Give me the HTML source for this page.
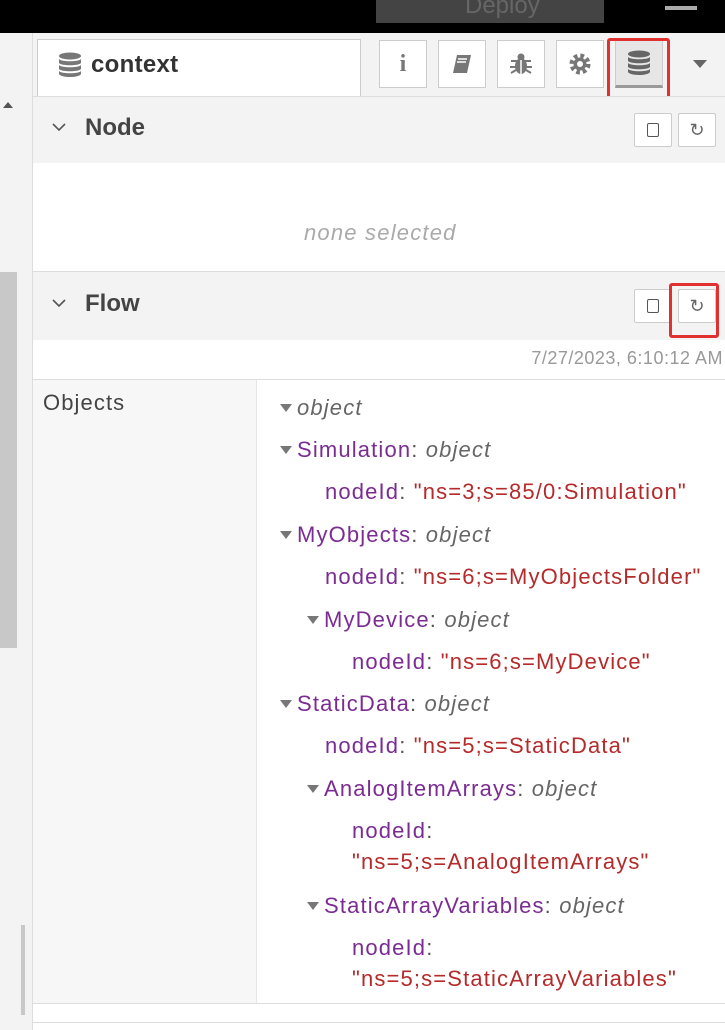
<!DOCTYPE html><html><head><style>
*{margin:0;padding:0;box-sizing:border-box}
body{width:725px;height:1030px;position:relative;overflow:hidden;background:#fff;font-family:"Liberation Sans",sans-serif}
.a{position:absolute}
.t{position:absolute;font-size:22px;line-height:26px;white-space:nowrap;color:#555;letter-spacing:1.15px}
.k{color:#7b2c93}.s{color:#b52a2a}.o{color:#666;font-style:italic}
.tri{display:inline-block;width:0;height:0;border-left:6px solid transparent;border-right:6px solid transparent;border-top:8px solid #777;margin-right:5px;vertical-align:3px}
.btn{position:absolute;top:40px;width:48px;height:48px;border:1px solid #ccc;background:#fff;display:flex;align-items:center;justify-content:center}
.sb{position:absolute;width:38px;height:34px;border:1px solid #ccc;background:#fff;border-radius:2px;display:flex;align-items:center;justify-content:center}
.hd{position:absolute;left:33px;right:0;background:#f3f3f3;border-top:1px solid #ddd}
.chev{position:absolute;left:52px}
.ht{position:absolute;left:85px;font-size:24px;font-weight:bold;color:#444}
</style></head><body>
<div class="a" style="left:0;top:0;width:725px;height:33px;background:#000"></div>
<div class="a" style="left:376px;top:0;width:228px;height:23px;background:#444"></div>
<div class="a" style="left:465px;top:-8px;font-size:24px;color:#666">Deploy</div>
<div class="a" style="left:665px;top:6px;width:32px;height:4px;background:#aaa"></div>
<div class="a" style="left:0;top:33px;width:33px;height:997px;background:#f3f3f3;border-right:1px solid #ddd"></div>
<div class="a" style="left:0;top:272px;width:17px;height:376px;background:#c8c8c8"></div>
<div class="a" style="left:21px;top:925px;width:4px;height:90px;background:#c8c8c8"></div>
<div class="a" style="left:3px;top:102px;border-left:5px solid transparent;border-right:5px solid transparent;border-bottom:6px solid #555"></div>
<div class="a" style="left:33px;top:33px;width:692px;height:63px;background:#f3f3f3"></div>
<div class="a" style="left:37px;top:39px;width:324px;height:58px;background:#fff;border:1px solid #ccc;border-bottom:none"></div>
<svg class="a" style="left:58px;top:52px" width="24" height="26" viewBox="0 0 24 26"><g fill="#777"><ellipse cx="12" cy="4" rx="11" ry="3.5"/><path d="M1 7c2 3 20 3 22 0v4c-2 3-20 3-22 0z"/><path d="M1 13c2 3 20 3 22 0v4c-2 3-20 3-22 0z"/><path d="M1 19c2 3 20 3 22 0v3c-2 4-20 4-22 0z"/></g></svg>
<div class="a" style="left:91px;top:51px;font-size:24px;font-weight:bold;color:#333;letter-spacing:0.3px">context</div>
<div class="btn" style="left:379px"><span style="font-family:'Liberation Serif';font-weight:bold;font-size:24px;color:#777">i</span></div>
<div class="btn" style="left:438px"><svg width="22" height="22" viewBox="0 0 22 22"><path d="M6 2h14l-4 18H2z" fill="#777"/><path d="M7 6h9M6 9h9" stroke="#fff" stroke-width="1.5"/></svg></div>
<div class="btn" style="left:497px"><svg width="24" height="24" viewBox="0 0 24 24" fill="#777"><ellipse cx="12" cy="14" rx="6" ry="8"/><circle cx="12" cy="5" r="3.5"/><path d="M2 9h20M1 15h22M2 21l5-3M22 21l-5-3" stroke="#777" stroke-width="2"/><path d="M12 8v14" stroke="#fff" stroke-width="1.5"/></svg></div>
<div class="btn" style="left:556px"><svg width="24" height="24" viewBox="0 0 24 24"><circle cx="12" cy="12" r="8" fill="none" stroke="#777" stroke-width="5" stroke-dasharray="3.5 2.8"/><circle cx="12" cy="12" r="6.5" fill="#777"/><circle cx="12" cy="12" r="3" fill="#fff"/></svg></div>
<div class="btn" style="left:615px;background:#e6e6e6;border-color:#ccc;border-bottom:3px solid #999"><svg width="24" height="26" viewBox="0 0 24 26"><g fill="#666"><ellipse cx="12" cy="4" rx="11" ry="3.5"/><path d="M1 7c2 3 20 3 22 0v4c-2 3-20 3-22 0z"/><path d="M1 13c2 3 20 3 22 0v4c-2 3-20 3-22 0z"/><path d="M1 19c2 3 20 3 22 0v3c-2 4-20 4-22 0z"/></g></svg></div>
<div class="a" style="left:607px;top:38px;width:63px;height:63px;border:3px solid #e03030;border-radius:3px"></div>
<div class="a" style="left:693px;top:60px;border-left:7px solid transparent;border-right:7px solid transparent;border-top:8px solid #666"></div>
<div class="hd" style="top:96px;height:67px"></div>
<svg class="chev" style="top:122px" width="14" height="10" viewBox="0 0 14 10"><path d="M1 2l6 6 6-6" fill="none" stroke="#555" stroke-width="1.6"/></svg>
<div class="ht" style="top:114px">Node</div>
<div class="sb" style="left:634px;top:113px"><div style="width:12px;height:14px;border:1.5px solid #555;border-radius:2px"></div></div>
<div class="sb" style="left:678px;top:113px;font-size:18px;color:#666">&#8635;</div>
<div class="a" style="left:304px;top:220px;font-size:22px;font-style:italic;color:#aaa;letter-spacing:1.2px">none selected</div>
<div class="hd" style="top:271px;height:69px"></div>
<svg class="chev" style="top:298px" width="14" height="10" viewBox="0 0 14 10"><path d="M1 2l6 6 6-6" fill="none" stroke="#555" stroke-width="1.6"/></svg>
<div class="ht" style="top:290px">Flow</div>
<div class="sb" style="left:634px;top:289px"><div style="width:12px;height:14px;border:1.5px solid #555;border-radius:2px"></div></div>
<div class="sb" style="left:678px;top:289px;font-size:18px;color:#666">&#8635;</div>
<div class="a" style="left:669px;top:283px;width:50px;height:55px;border:3px solid #e03030;border-radius:3px"></div>
<div class="a" style="right:2px;top:348px;font-size:18px;color:#999;letter-spacing:0.5px">7/27/2023, 6:10:12 AM</div>
<div class="a" style="left:33px;top:379px;width:692px;height:1px;background:#ddd"></div>
<div class="a" style="left:33px;top:380px;width:224px;height:623px;background:#f7f7f7;border-right:1px solid #e6e6e6"></div>
<div class="a" style="left:43px;top:390px;font-size:22px;color:#444;letter-spacing:1.1px">Objects</div>
<div class="a" style="left:33px;top:1003px;width:692px;height:1px;background:#ddd"></div>
<div class="a" style="left:33px;top:1022px;width:692px;height:1px;background:#ddd"></div>
<div class="t" style="left:280px;top:395px"><span class="tri"></span><span class="o">object</span></div>
<div class="t" style="left:280px;top:437px"><span class="tri"></span><span class="k">Simulation</span>: <span class="o">object</span></div>
<div class="t" style="left:325px;top:479px"><span class="k">nodeId</span>: <span class="s">"ns=3;s=85/0:Simulation"</span></div>
<div class="t" style="left:280px;top:522px"><span class="tri"></span><span class="k">MyObjects</span>: <span class="o">object</span></div>
<div class="t" style="left:325px;top:564px"><span class="k">nodeId</span>: <span class="s">"ns=6;s=MyObjectsFolder"</span></div>
<div class="t" style="left:307px;top:607px"><span class="tri"></span><span class="k">MyDevice</span>: <span class="o">object</span></div>
<div class="t" style="left:352px;top:649px"><span class="k">nodeId</span>: <span class="s">"ns=6;s=MyDevice"</span></div>
<div class="t" style="left:280px;top:691px"><span class="tri"></span><span class="k">StaticData</span>: <span class="o">object</span></div>
<div class="t" style="left:325px;top:733px"><span class="k">nodeId</span>: <span class="s">"ns=5;s=StaticData"</span></div>
<div class="t" style="left:307px;top:776px"><span class="tri"></span><span class="k">AnalogItemArrays</span>: <span class="o">object</span></div>
<div class="t" style="left:352px;top:818px"><span class="k">nodeId</span>:</div>
<div class="t" style="left:352px;top:849px"><span class="s">"ns=5;s=AnalogItemArrays"</span></div>
<div class="t" style="left:307px;top:893px"><span class="tri"></span><span class="k">StaticArrayVariables</span>: <span class="o">object</span></div>
<div class="t" style="left:352px;top:935px"><span class="k">nodeId</span>:</div>
<div class="t" style="left:352px;top:966px"><span class="s">"ns=5;s=StaticArrayVariables"</span></div>
</body></html>
